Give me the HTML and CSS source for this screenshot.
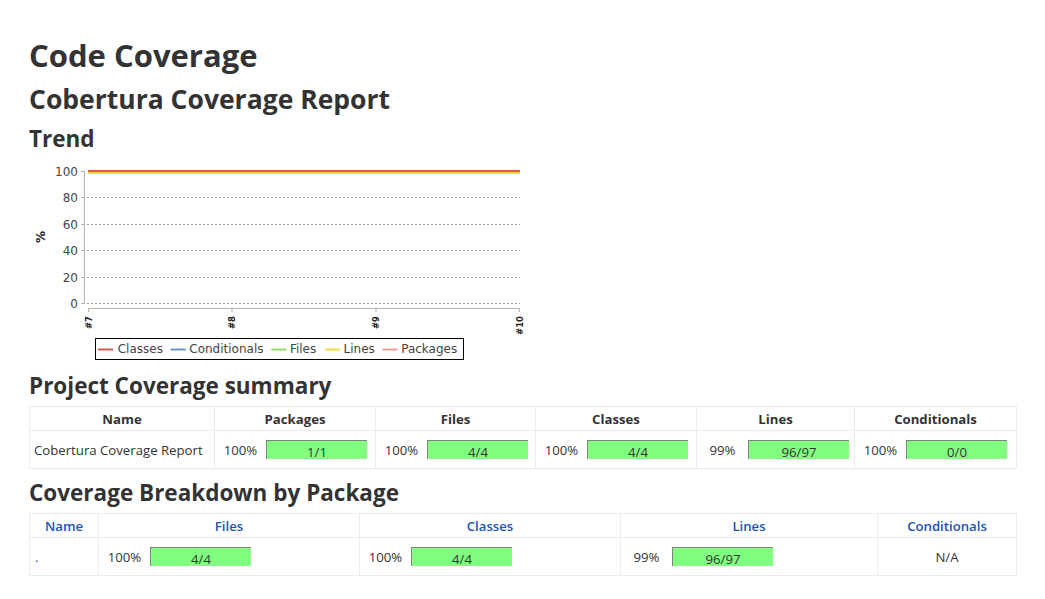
FILE: index.html
```html
<!DOCTYPE html>
<html lang="en">
<head>
<meta charset="utf-8">
<title>Code Coverage</title>
<link rel="stylesheet" href="styles.css">
</head>
<body>
<main class="page">
  <h1 class="title">Code Coverage</h1>
  <h2 class="subtitle">Cobertura Coverage Report</h2>
  <h3 class="section section-trend">Trend</h3>
  <div class="chart">
    <svg width="500" height="200" viewBox="0 0 500 200" xmlns="http://www.w3.org/2000/svg">
      <g class="grid-lines" stroke="#9a9a9a" stroke-width="1" stroke-dasharray="2 2">
        <line x1="57" y1="35.5" x2="490" y2="35.5"/>
        <line x1="57" y1="62.5" x2="490" y2="62.5"/>
        <line x1="57" y1="88.5" x2="490" y2="88.5"/>
        <line x1="57" y1="115.5" x2="490" y2="115.5"/>
        <line x1="57" y1="141.5" x2="490" y2="141.5"/>
      </g>
      <g stroke="#b4b4b4" stroke-width="1">
        <line x1="54.5" y1="9" x2="54.5" y2="142"/>
        <line x1="51" y1="9.5" x2="54.5" y2="9.5"/>
        <line x1="51" y1="35.5" x2="54.5" y2="35.5"/>
        <line x1="51" y1="62.5" x2="54.5" y2="62.5"/>
        <line x1="51" y1="88.5" x2="54.5" y2="88.5"/>
        <line x1="51" y1="115.5" x2="54.5" y2="115.5"/>
        <line x1="51" y1="141.5" x2="54.5" y2="141.5"/>
        <line x1="58" y1="146.5" x2="490" y2="146.5"/>
        <line x1="58.5" y1="146.5" x2="58.5" y2="150"/>
        <line x1="202" y1="146.5" x2="202" y2="150"/>
        <line x1="346" y1="146.5" x2="346" y2="150"/>
        <line x1="489.5" y1="146.5" x2="489.5" y2="150"/>
      </g>
      <g font-family="'DejaVu Sans', sans-serif" font-size="12" fill="#444" text-anchor="end">
        <text x="48" y="13.5">100</text>
        <text x="48" y="39.5">80</text>
        <text x="48" y="66.5">60</text>
        <text x="48" y="92.5">40</text>
        <text x="48" y="119.5">20</text>
        <text x="48" y="145.5">0</text>
      </g>
      <text transform="translate(15 75) rotate(-90)" font-family="'DejaVu Sans', sans-serif" font-size="12" font-weight="bold" fill="#222" text-anchor="middle">%</text>
      <g stroke-width="2" fill="none">
        <line x1="58" y1="9.5" x2="490" y2="9.5" stroke="#6f8fd0"/>
        <line x1="58" y1="9.5" x2="490" y2="9.5" stroke="#90dd60"/>
        <line x1="58" y1="9.5" x2="490" y2="9.5" stroke="#f09a9a"/>
        <line x1="58" y1="11" x2="490" y2="11" stroke="#f5dc3c"/>
        <line x1="58" y1="9" x2="490" y2="9" stroke="#d45a5a"/>
      </g>
      <g font-family="'DejaVu Sans', sans-serif" font-size="8.5" font-weight="bold" fill="#222" text-anchor="end">
        <text transform="translate(61.5 154) rotate(-90)">#7</text>
        <text transform="translate(205 154) rotate(-90)">#8</text>
        <text transform="translate(349 154) rotate(-90)">#9</text>
        <text transform="translate(492.5 154) rotate(-90)">#10</text>
      </g>
      <rect x="65.5" y="176.5" width="368" height="21" fill="#fff" stroke="#000" stroke-width="1"/>
      <g stroke-width="2">
        <line x1="68" y1="187.5" x2="83" y2="187.5" stroke="#d45a5a"/>
        <line x1="140.7" y1="187.5" x2="155.7" y2="187.5" stroke="#6f8fd0"/>
        <line x1="241.3" y1="187.5" x2="256.3" y2="187.5" stroke="#90dd60"/>
        <line x1="294.9" y1="187.5" x2="309.9" y2="187.5" stroke="#f5dc3c"/>
        <line x1="352.6" y1="187.5" x2="367.6" y2="187.5" stroke="#f09a9a"/>
      </g>
      <g font-family="'DejaVu Sans', sans-serif" font-size="12" fill="#444">
        <text x="87.7" y="191">Classes</text>
        <text x="159.3" y="191">Conditionals</text>
        <text x="259.9" y="191">Files</text>
        <text x="313.5" y="191">Lines</text>
        <text x="371.2" y="191">Packages</text>
      </g>
    </svg>
  </div>

  <h3 class="section section-summary">Project Coverage summary</h3>
  <table class="grid summary">
    <colgroup>
      <col class="c-name1"><col class="c-w161"><col class="c-w160"><col class="c-w161"><col class="c-w158"><col class="c-w162">
    </colgroup>
    <thead>
      <tr><th>Name</th><th>Packages</th><th>Files</th><th>Classes</th><th>Lines</th><th>Conditionals</th></tr>
    </thead>
    <tbody>
      <tr>
        <td class="name">Cobertura Coverage Report</td>
        <td><div class="metric"><span class="pct">100%</span><div class="bar"><span>1/1</span></div></div></td>
        <td><div class="metric"><span class="pct">100%</span><div class="bar"><span>4/4</span></div></div></td>
        <td><div class="metric"><span class="pct">100%</span><div class="bar"><span>4/4</span></div></div></td>
        <td><div class="metric"><span class="pct">99%</span><div class="bar"><span>96/97</span></div></div></td>
        <td><div class="metric"><span class="pct">100%</span><div class="bar"><span>0/0</span></div></div></td>
      </tr>
    </tbody>
  </table>

  <h3 class="section section-breakdown">Coverage Breakdown by Package</h3>
  <table class="grid packages">
    <colgroup>
      <col class="c-name2"><col class="c-w261"><col class="c-w261"><col class="c-w257"><col class="c-w139">
    </colgroup>
    <thead>
      <tr><th><a href="#">Name</a></th><th><a href="#">Files</a></th><th><a href="#">Classes</a></th><th><a href="#">Lines</a></th><th><a href="#">Conditionals</a></th></tr>
    </thead>
    <tbody>
      <tr>
        <td class="name"><a href="#">.</a></td>
        <td><div class="metric"><span class="pct">100%</span><div class="bar"><span>4/4</span></div></div></td>
        <td><div class="metric"><span class="pct">100%</span><div class="bar"><span>4/4</span></div></div></td>
        <td><div class="metric"><span class="pct">99%</span><div class="bar"><span>96/97</span></div></div></td>
        <td class="na">N/A</td>
      </tr>
    </tbody>
  </table>
</main>
</body>
</html>
```

FILE: styles.css
```css
html, body {
  margin: 0;
  padding: 0;
  background: #fff;
}

body {
  font-family: "Open Sans", "Noto Sans", "Liberation Sans", sans-serif;
  color: #333;
  font-size: 13.2px;
}

.page {
  padding: 37px 29px 20px 29px;
}

.title {
  font-size: 31px;
  line-height: 36px;
  font-weight: 700;
  margin: 0 0 10px 0;
  color: #333;
}

.subtitle {
  font-size: 26.5px;
  line-height: 32px;
  font-weight: 700;
  margin: 0 0 10px 0;
  color: #333;
}

.section {
  font-size: 22.5px;
  line-height: 28px;
  font-weight: 700;
  margin: 0;
  color: #333;
}

.section-trend { margin-bottom: 9px; }
.section-summary { margin-top: 10px; margin-bottom: 6px; }
.section-breakdown { margin-top: 10px; margin-bottom: 6px; }

.chart {
  width: 500px;
  height: 200px;
  margin-left: 1px;
}

.chart svg {
  display: block;
}

.grid {
  width: 100%;
  border-collapse: collapse;
  table-layout: fixed;
  border: 1px solid #ececec;
}

.grid th,
.grid td {
  border: 1px solid #ececec;
  color: #333;
}

.grid th {
  height: 23px;
  padding: 0 4px;
  font-weight: 700;
  text-align: center;
  line-height: 18px;
}

.grid td {
  height: 37px;
  padding: 0 4px;
  line-height: 18px;
}

.grid td.na {
  text-align: center;
}

.packages th a {
  color: #2152b5;
  text-decoration: none;
  font-weight: 600;
}

.packages td.name a {
  color: #2152b5;
  text-decoration: none;
  padding-left: 1px;
}

.c-name1 { width: 185px; }
.c-w161 { width: 161px; }
.c-w160 { width: 160px; }
.c-w158 { width: 158px; }
.c-w162 { width: 162px; }
.c-name2 { width: 69px; }
.c-w261 { width: 261px; }
.c-w257 { width: 257px; }
.c-w139 { width: 139px; }

.metric {
  display: flex;
  align-items: center;
}

.pct {
  width: 43px;
  text-align: center;
  flex: none;
}

.bar {
  flex: none;
  width: 100px;
  height: 18px;
  margin-left: 4px;
  background: #80ff80;
  border-top: 1px solid #808080;
  border-left: 1px solid #808080;
  text-align: center;
  line-height: 23px;
  color: #333;
  white-space: nowrap;
}
```
